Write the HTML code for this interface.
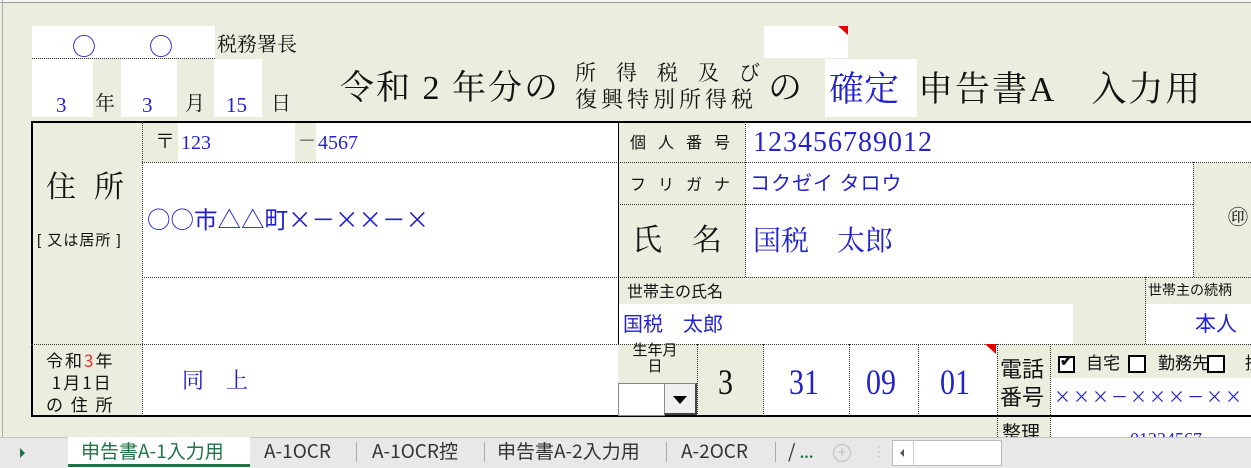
<!DOCTYPE html>
<html><head><meta charset="utf-8">
<style>
*{margin:0;padding:0;box-sizing:border-box}
body{width:1251px;height:468px;overflow:hidden;background:#ebeedf;position:relative;font-family:"Liberation Serif","Noto Serif CJK SC",serif;color:#111}
.a{position:absolute}
.w{position:absolute;background:#fff}
.g{position:absolute;background:#ebeedf}
.t{position:absolute;white-space:nowrap;line-height:1}
.b{color:#2222cc}
.hd{position:absolute;border-top:1px dotted #333}
.vd{position:absolute;border-left:1px dotted #333}
.sans{font-family:"Liberation Sans","Noto Sans CJK JP",sans-serif}
.jp{font-family:"Noto Sans CJK JP",sans-serif}
.tall{transform:scaleY(1.2);transform-origin:0 50%}
</style></head><body>
<div class="a" style="left:0;top:0;width:1251px;height:3px;background:#f6f6f6;border-bottom:1px solid #9a9a9a"></div>
<div class="a" style="left:2px;top:0;width:1px;height:437px;background:#aaa"></div>

<div class="w" style="left:32px;top:26px;width:183px;height:32px"></div>
<div class="hd" style="left:32px;top:58px;width:183px"></div>
<div class="t b jp" style="left:72px;top:33px;font-size:24px">○</div>
<div class="t b jp" style="left:149px;top:33px;font-size:24px">○</div>
<div class="t" style="left:217px;top:35px;font-size:20px">税務署長</div>
<div class="w" style="left:32px;top:59px;width:61px;height:58px"></div>
<div class="w" style="left:121px;top:59px;width:56px;height:58px"></div>
<div class="w" style="left:214px;top:59px;width:48px;height:58px"></div>
<div class="t b" style="left:56px;top:95px;font-size:21px">3</div>
<div class="t" style="left:95px;top:94px;font-size:20px">年</div>
<div class="t b" style="left:142px;top:95px;font-size:21px">3</div>
<div class="t" style="left:185px;top:94px;font-size:20px">月</div>
<div class="t b" style="left:226px;top:95px;font-size:21px">15</div>
<div class="t" style="left:271px;top:94px;font-size:20px">日</div>

<div class="t" style="left:340px;top:72px;font-size:34px;letter-spacing:2px">令和 2 年分の</div>
<div class="t" style="left:575px;top:63px;font-size:21px;letter-spacing:20px">所得税及び</div>
<div class="t" style="left:575px;top:89px;font-size:22px;letter-spacing:4px">復興特別所得税</div>
<div class="t" style="left:768px;top:72px;font-size:34px">の</div>
<div class="w" style="left:764px;top:26px;width:84px;height:32px"></div>
<div class="a" style="left:838px;top:26px;width:0;height:0;border-left:10px solid transparent;border-top:9px solid #e00000"></div>
<div class="w" style="left:825px;top:59px;width:92px;height:58px"></div>
<div class="t b" style="left:829px;top:72px;font-size:35px">確定</div>
<div class="t" style="left:918px;top:72px;font-size:35px;letter-spacing:2px">申告書A　入力用</div>

<div class="w" style="left:142px;top:121px;width:476px;height:295px"></div>
<div class="g" style="left:142px;top:122px;width:36px;height:40px"></div>
<div class="g" style="left:295px;top:122px;width:21px;height:40px"></div>
<div class="g" style="left:618px;top:122px;width:127px;height:155px"></div>
<div class="w" style="left:745px;top:122px;width:506px;height:155px"></div>
<div class="g" style="left:1193px;top:163px;width:58px;height:114px"></div>
<div class="g" style="left:618px;top:277px;width:633px;height:67px"></div>
<div class="w" style="left:618px;top:304px;width:455px;height:40px"></div>
<div class="w" style="left:1145px;top:304px;width:106px;height:40px"></div>
<div class="g" style="left:618px;top:344px;width:145px;height:72px"></div>
<div class="w" style="left:763px;top:344px;width:234px;height:72px"></div>
<div class="g" style="left:1050px;top:344px;width:201px;height:34px"></div>
<div class="w" style="left:1050px;top:378px;width:201px;height:38px"></div>
<div class="w" style="left:1050px;top:417px;width:201px;height:20px"></div>

<div class="a" style="left:31px;top:121px;width:1220px;height:2px;background:#000"></div>
<div class="a" style="left:31px;top:121px;width:2px;height:296px;background:#000"></div>
<div class="a" style="left:31px;top:415px;width:1220px;height:2px;background:#000"></div>
<div class="vd" style="left:142px;top:122px;height:294px"></div>
<div class="a" style="left:618px;top:122px;width:1px;height:222px;background:#000"></div>
<div class="hd" style="left:142px;top:162px;width:1109px"></div>
<div class="hd" style="left:618px;top:204px;width:575px"></div>
<div class="hd" style="left:142px;top:277px;width:1109px"></div>
<div class="hd" style="left:31px;top:344px;width:1220px"></div>
<div class="vd" style="left:745px;top:122px;height:155px"></div>
<div class="vd" style="left:1193px;top:162px;height:115px"></div>
<div class="vd" style="left:1145px;top:277px;height:67px"></div>
<div class="vd" style="left:697px;top:344px;height:72px"></div>
<div class="vd" style="left:763px;top:344px;height:72px"></div>
<div class="vd" style="left:849px;top:344px;height:72px"></div>
<div class="vd" style="left:918px;top:344px;height:72px"></div>
<div class="vd" style="left:997px;top:344px;height:93px"></div>
<div class="vd" style="left:1050px;top:344px;height:93px"></div>
<div class="a" style="left:985px;top:344px;width:0;height:0;border-left:11px solid transparent;border-top:10px solid #e00000"></div>

<div class="t" style="left:46px;top:173px;font-size:30px;letter-spacing:18px">住所</div>
<div class="t sans" style="left:37px;top:233px;font-size:15px;letter-spacing:1px">[ 又は居所 ]</div>
<div class="t jp" style="left:46px;top:349px;font-size:17px;line-height:22px;letter-spacing:2px">令和<span style="color:#e03030">3</span>年<br>&nbsp;1月1日<br>の 住 所</div>

<div class="t" style="left:155px;top:132px;font-size:20px">〒</div>
<div class="t b" style="left:181px;top:133px;font-size:20px">123</div>
<div class="t" style="left:298px;top:132px;font-size:18px">－</div>
<div class="t b" style="left:318px;top:133px;font-size:20px">4567</div>
<div class="t b jp" style="left:147px;top:207px;font-size:23.5px">○○市△△町×－××－×</div>
<div class="t b" style="left:182px;top:370px;font-size:22px">同　上</div>

<div class="t jp" style="left:630px;top:133px;font-size:16px;letter-spacing:12px">個人番号</div>
<div class="t b" style="left:753px;top:129px;font-size:28px;letter-spacing:1px">123456789012</div>
<div class="t jp" style="left:630px;top:175px;font-size:16px;letter-spacing:12px">フリガナ</div>
<div class="t b jp" style="left:750px;top:172px;font-size:20px;letter-spacing:1px">コクゼイ タロウ</div>
<div class="t" style="left:632px;top:226px;font-size:30px;letter-spacing:30px">氏名</div>
<div class="t b" style="left:753px;top:228px;font-size:28px">国税　太郎</div>
<div class="t" style="left:1228px;top:208px;font-size:20px">㊞</div>
<div class="t jp" style="left:627px;top:282px;font-size:16px">世帯主の氏名</div>
<div class="t jp" style="left:1148px;top:283px;font-size:14px">世帯主の続柄</div>
<div class="t b jp" style="left:623px;top:313px;font-size:20px">国税　太郎</div>
<div class="t b jp" style="left:1195px;top:313px;font-size:21px">本人</div>

<div class="t jp" style="left:625px;top:342px;font-size:15px;line-height:16px;text-align:center;width:60px">生年月<br>日</div>
<div class="w" style="left:618px;top:383px;width:47px;height:33px;border:1px solid #888"></div>
<div class="a" style="left:664px;top:383px;width:33px;height:32px;background:#f0f0f0;border:1px solid #888;border-right:2px solid #444;border-bottom:2px solid #444"></div>
<div class="a" style="left:673px;top:396px;width:0;height:0;border-left:7px solid transparent;border-right:7px solid transparent;border-top:8px solid #000"></div>
<div class="t tall" style="left:718px;top:368px;font-size:30px">3</div>
<div class="t b tall" style="left:789px;top:368px;font-size:30px">31</div>
<div class="t b tall" style="left:866px;top:368px;font-size:30px">09</div>
<div class="t b tall" style="left:940px;top:368px;font-size:30px">01</div>
<div class="t jp" style="left:1000px;top:354px;font-size:22px;line-height:28px">電話<br>番号</div>
<div class="a" style="left:1058px;top:356px;width:17px;height:17px;border:2px solid #000;background:#fff"></div>
<div class="t" style="left:1060px;top:355px;font-size:15px;font-weight:bold">✔</div>
<div class="t jp" style="left:1086px;top:353px;font-size:17px">自宅</div>
<div class="a" style="left:1128px;top:355px;width:18px;height:18px;border:2px solid #000;background:#fff"></div>
<div class="t jp" style="left:1158px;top:353px;font-size:17px">勤務先</div>
<div class="a" style="left:1207px;top:355px;width:18px;height:18px;border:2px solid #000;background:#fff"></div>
<div class="t jp" style="left:1245px;top:353px;font-size:17px">携</div>
<div class="t b jp" style="left:1054px;top:387px;font-size:17px;letter-spacing:2px">×××－×××－××</div>
<div class="t jp" style="left:1002px;top:422px;font-size:19px">整理</div>
<div class="t b" style="left:1130px;top:430px;font-size:18px">01234567</div>

<div class="a" style="left:0;top:437px;width:1251px;height:31px;background:#e8e8e8;border-top:1px solid #c6c6c6"></div>
<div class="a" style="left:20px;top:448px;width:0;height:0;border-top:5px solid transparent;border-bottom:5px solid transparent;border-left:5px solid #217346"></div>
<div class="a" style="left:68px;top:437px;width:182px;height:31px;background:#fff"></div>
<div class="a" style="left:68px;top:464px;width:182px;height:3px;background:#217346"></div>
<div class="t jp" style="left:81px;top:441px;font-size:19px;color:#217346">申告書A-1入力用</div>
<div class="t jp" style="left:264px;top:441px;font-size:19px;color:#333">A-1OCR</div>
<div class="a" style="left:356px;top:442px;width:1px;height:20px;background:#aaa"></div>
<div class="t jp" style="left:372px;top:441px;font-size:19px;color:#333">A-1OCR控</div>
<div class="a" style="left:484px;top:442px;width:1px;height:20px;background:#aaa"></div>
<div class="t jp" style="left:497px;top:441px;font-size:19px;color:#333">申告書A-2入力用</div>
<div class="a" style="left:666px;top:442px;width:1px;height:20px;background:#aaa"></div>
<div class="t jp" style="left:681px;top:441px;font-size:19px;color:#333">A-2OCR</div>
<div class="a" style="left:775px;top:442px;width:1px;height:20px;background:#aaa"></div>
<div class="t jp" style="left:788px;top:441px;font-size:19px;color:#333">/ <b style="color:#217346;font-size:14px">...</b></div>
<div class="a" style="left:833px;top:444px;width:18px;height:18px;border:1px solid #bbb;border-radius:50%;color:#bbb;font:15px/16px 'Liberation Sans';text-align:center">+</div>
<div class="t sans" style="left:872px;top:444px;font-size:14px;color:#bbb">⋮</div>
<div class="a" style="left:892px;top:440px;width:110px;height:26px;background:#fff;border:1px solid #bbb"></div>
<div class="a" style="left:892px;top:440px;width:22px;height:26px;border-right:1px solid #ccc"></div>
<div class="a" style="left:900px;top:449px;width:0;height:0;border-top:4px solid transparent;border-bottom:4px solid transparent;border-right:4px solid #555"></div>
</body></html>
